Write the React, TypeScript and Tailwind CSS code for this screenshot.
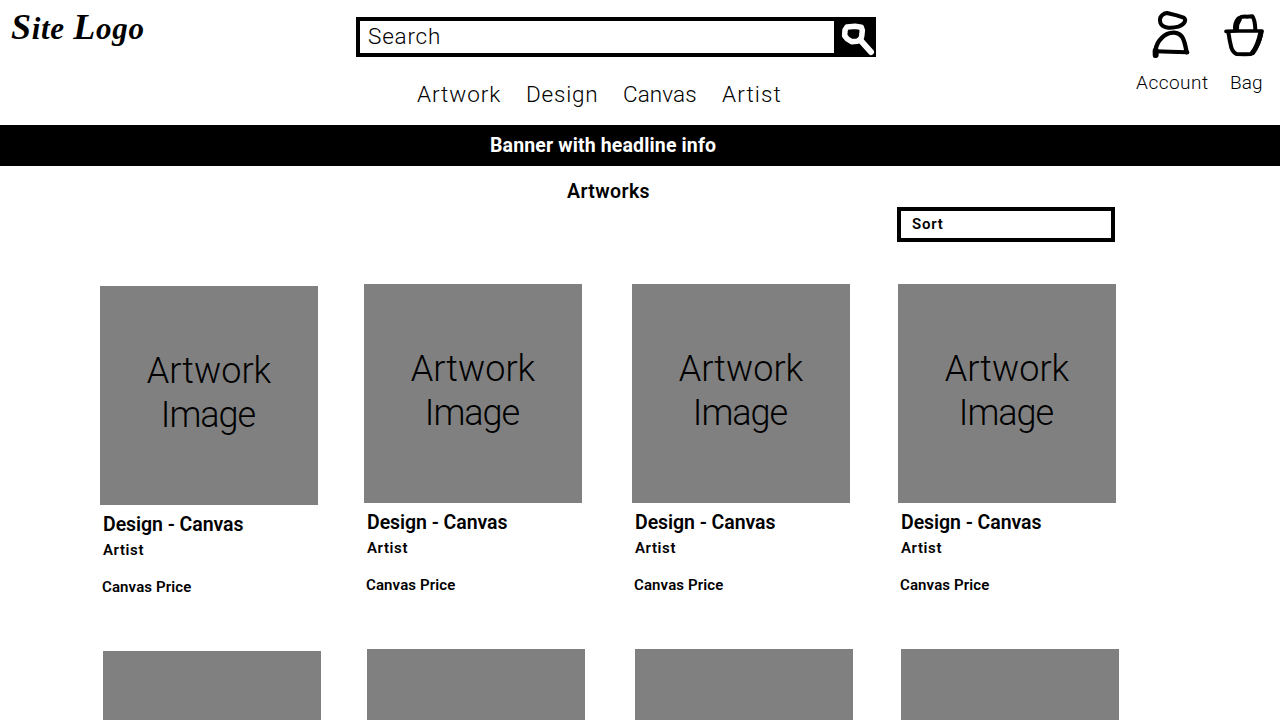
type Item = { title: string; artist: string; price: string };

const item: Item = { title: "Design - Canvas", artist: "Artist", price: "Canvas Price" };

function SearchIcon() {
  return (
    <svg className="block h-10 w-[42px]" viewBox="702 36 126 120" fill="none" stroke="#fff" strokeLinecap="round" strokeLinejoin="round">
      <path d="M741 66 L765 64 L784 67 L787 76 L785 94 L782 103 L771 109 L755 110 L742 102 L734 92 L735 75 Z" strokeWidth="16.5" />
      <path d="M780 104 L813 141" strokeWidth="18" />
    </svg>
  );
}

function AccountIcon() {
  return (
    <svg className="block h-[52px] w-[42px]" viewBox="90 24 126 156" fill="none" stroke="#000" strokeLinecap="round" strokeLinejoin="round">
      <path d="M141 39 L170 46 L191 53 Q198 58 194 66 Q189 75 175 80 Q160 84 145 83 Q126 81 121 68 Q117 54 127 45 Q134 39 141 39 Z" strokeWidth="12" />
      <path d="M106 167 L107 149 Q110 128 124 115 Q141 97 163 98 Q178 99 186 110 Q194 122 200 157" strokeWidth="13" />
      <path d="M107 154 L150 155 L202 157" strokeWidth="12" />
      <path d="M107 152 L107 165" strokeWidth="18" />
    </svg>
  );
}

function BagIcon() {
  return (
    <svg className="block h-12 w-11" viewBox="306 36 132 144" fill="none" stroke="#000" strokeLinecap="round" strokeLinejoin="round">
      <path d="M347 90 Q346 68 357 55 Q364 49 380 50 L397 49 Q405 59 406 90" strokeWidth="12" />
      <path d="M348 88 Q347 70 356 59" strokeWidth="18" />
      <path d="M318 94 L350 93 L426 93" strokeWidth="11" />
      <path d="M325 96 Q329 124 334 143 Q339 158 350 162 L374 163 L393 162 Q402 155 409 141 Q420 122 425 95" strokeWidth="12" />
      <path d="M398 158 Q414 138 422 100" strokeWidth="15" />
    </svg>
  );
}

function ArtCard({ data }: { data: Item }) {
  return (
    <article className="w-[218px] shrink-0 whitespace-nowrap">
      <div className="h-[219px] w-[218px] bg-[#808080] pt-[63px] text-center text-[36px] leading-[44px] font-light">
        <span className="block tracking-[0.05px]">Artwork</span>
        <span className="block pr-[2px] tracking-[-1px]">Image</span>
      </div>
      <h2 className="mt-2 h-6 pl-[3px] text-[19.5px] leading-6 font-semibold tracking-[-0.06px]">{data.title}</h2>
      <p className="mt-[3px] h-5 pl-[3px] text-[15px] leading-5 font-semibold tracking-[0.6px]">{data.artist}</p>
      <p className="mt-[17px] h-5 pl-[2px] text-[15px] leading-5 font-semibold tracking-[0.12px]">{data.price}</p>
    </article>
  );
}

function Column({ className }: { className: string }) {
  return (
    <div className={className}>
      <ArtCard data={item} />
      <div className="mt-[54px] ml-[3px] h-[219px] w-[218px] bg-[#808080]" />
    </div>
  );
}

export default function App() {
  return (
    <div className="h-[720px] w-[1280px] overflow-hidden bg-white font-['Roboto','Liberation_Sans',sans-serif] text-black">
      <header className="flex h-[125px] whitespace-nowrap">
        <div className="w-[356px] pt-[7px] pl-[11px]">
          <span className="block font-['Liberation_Serif',serif] text-[31px] leading-10 font-bold tracking-[0.7px] italic first-letter:text-[36px]">Site <span className="text-[36px] leading-none">L</span>ogo</span>
        </div>
        <div className="w-[520px] pt-[17px]">
          <div className="flex h-10">
            <div className="h-10 w-[478px] border-4 border-r-0 border-black pl-2 text-[22.5px] leading-[30px] font-light tracking-[0.8px]">Search</div>
            <div className="w-[42px] bg-black">
              <SearchIcon />
            </div>
          </div>
          <nav className="mt-[22px] flex pl-[61px] text-[22.5px] leading-[30px] font-light">
            <a className="w-[109px] tracking-[0.95px]">Artwork</a>
            <a className="w-[97px] tracking-[0.8px]">Design</a>
            <a className="w-[99px] tracking-[0.1px]">Canvas</a>
            <a className="tracking-[1.1px]">Artist</a>
          </nav>
        </div>
        <div className="flex pl-[260px] text-[19px] leading-6 font-light">
          <div className="w-[94px] pt-2">
            <div className="pl-[14px]"><AccountIcon /></div>
            <span className="mt-[11px] block tracking-[0.5px]">Account</span>
          </div>
          <div className="w-[50px] pt-3">
            <div className="-ml-2"><BagIcon /></div>
            <span className="mt-[11px] block tracking-[0.1px]">Bag</span>
          </div>
        </div>
      </header>
      <div className="h-[41px] bg-black pl-[490px] text-[19.5px] leading-[41px] font-bold tracking-[0.14px] whitespace-nowrap text-white">Banner with headline info</div>
      <div className="h-[41px] pt-[13px] pl-[567px] text-[19.5px] leading-[26px] font-semibold tracking-[0.4px]">Artworks</div>
      <div className="ml-[897px] h-[35px] w-[218px] border-4 border-black pl-[11px] text-[15px] leading-[26px] font-semibold tracking-[0.8px]">Sort</div>
      <main className="flex pt-[42px] pl-[100px]">
        <Column className="mt-[2px] w-[264px]" />
        <Column className="w-[268px]" />
        <Column className="w-[266px]" />
        <Column className="w-[222px]" />
      </main>
    </div>
  );
}
